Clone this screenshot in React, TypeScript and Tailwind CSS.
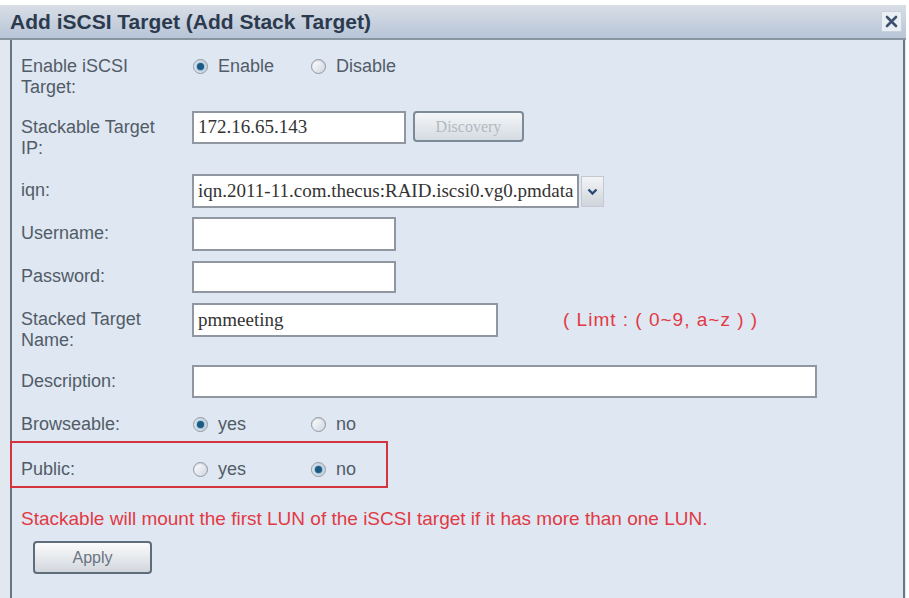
import React from "react";

const labelCls = "w-[171px] shrink-0 text-[18px] leading-[21px] text-[#525c67]";
const boxCls = "bg-white border-2 border-[#9097a0] flex items-center pl-[4px] font-['Liberation_Serif',serif] text-[19px] text-[#333]";

function Radio({ checked, label }: { checked?: boolean; label: string }) {
    return (
        <div className="flex items-center w-[118px] h-[21px]">
            <span className="w-[15px] h-[15px] rounded-full border border-[#8f98a3] bg-gradient-to-br from-white to-[#cfd7e1] flex items-center justify-center shrink-0 shadow-[inset_0_1px_1px_rgba(0,0,0,0.15)]">
                {checked && <span className="w-[7px] h-[7px] rounded-full bg-[#1d5a82] shadow-[0_0_2px_1px_rgba(80,150,200,0.7)]" />}
            </span>
            <span className="ml-[10px] text-[18px] leading-[21px] text-[#525c67]">{label}</span>
        </div>
    );
}

export default function App() {
    return (
        <div className="w-[909px] h-[598px] bg-white overflow-hidden font-['Liberation_Sans',Arial,sans-serif]">
            <div className="mt-[5px] w-[906px] h-[593px] flex flex-col bg-[#e2e8f0]">
                {/* title bar */}
                <div className="h-[35px] shrink-0 flex items-center justify-between pl-[10px] pr-[4px] bg-gradient-to-b from-[#d9dee6] to-[#b7c5d7] border-b-2 border-[#8a95a2]">
                    <span className="text-[21px] font-bold text-[#2c3a4e]">Add iSCSI Target (Add Stack Target)</span>
                    <span className="w-[21px] h-[21px] flex items-center justify-center bg-[#eaeff5] border border-[#c8d1dc] rounded-[2px]">
                        <svg width="13" height="13" viewBox="0 0 13 13">
                            <path d="M2 2 L11 11 M11 2 L2 11" stroke="#3e5170" strokeWidth="2.6" strokeLinecap="round" />
                        </svg>
                    </span>
                </div>

                <div className="flex-1 flex pl-[10px] pr-[1px]">
                    <div className="flex-1 border-l-2 border-r-2 border-[#6c7682] bg-[#dee7f2] pl-[9px] flex flex-col">
                        {/* enable */}
                        <div className="mt-[16px] flex items-start">
                            <div className={labelCls}>Enable iSCSI<br />Target:</div>
                            <div className="flex ml-[1px]">
                                <Radio checked label="Enable" />
                                <Radio label="Disable" />
                            </div>
                        </div>

                        {/* stackable ip */}
                        <div className="mt-[13px] flex items-start">
                            <div className={labelCls + " pt-[6px]"}>Stackable Target<br />IP:</div>
                            <div className={boxCls + " w-[214px] h-[33px]"}>172.16.65.143</div>
                            <div className="ml-[7px] w-[111px] h-[31px] rounded-[4px] border-2 border-[#7d8b99] bg-gradient-to-b from-[#f4f6f8] to-[#d5dbe2] flex items-center justify-center font-['Liberation_Serif',serif] text-[16px] text-[#b3b9c0]">
                                Discovery
                            </div>
                        </div>

                        {/* iqn */}
                        <div className="mt-[15px] flex items-start">
                            <div className={labelCls + " pt-[6px]"}>iqn:</div>
                            <div className={boxCls + " w-[387px] h-[34px]"}>iqn.2011-11.com.thecus:RAID.iscsi0.vg0.pmdata</div>
                            <div className="ml-[2px] mt-[2px] w-[23px] h-[31px] bg-gradient-to-b from-[#f3f4f6] to-[#cfd5dc] border border-[#c3c9d0] flex items-center justify-center">
                                <svg width="11" height="8" viewBox="0 0 11 8">
                                    <path d="M1.5 1.5 L5.5 5.5 L9.5 1.5" stroke="#2a4a78" strokeWidth="2.4" fill="none" />
                                </svg>
                            </div>
                        </div>

                        {/* username */}
                        <div className="mt-[9px] flex items-start">
                            <div className={labelCls + " pt-[6px]"}>Username:</div>
                            <div className={boxCls + " w-[204px] h-[34px]"} />
                        </div>

                        {/* password */}
                        <div className="mt-[10px] flex items-start">
                            <div className={labelCls + " pt-[5px]"}>Password:</div>
                            <div className={boxCls + " w-[204px] h-[32px]"} />
                        </div>

                        {/* stacked target name */}
                        <div className="mt-[10px] flex items-start">
                            <div className={labelCls + " pt-[6px]"}>Stacked Target<br />Name:</div>
                            <div className={boxCls + " w-[306px] h-[34px]"}>pmmeeting</div>
                            <div className="ml-[65px] pt-[6px] text-[19px] leading-[21px] tracking-[1px] text-[#e23a44] whitespace-pre">( Limt : ( 0~9, a~z ) )</div>
                        </div>

                        {/* description */}
                        <div className="mt-[14px] flex items-start">
                            <div className={labelCls + " pt-[6px]"}>Description:</div>
                            <div className={boxCls + " w-[625px] h-[33px]"} />
                        </div>

                        {/* browseable */}
                        <div className="mt-[14px] h-[24px] flex items-center">
                            <div className={labelCls}>Browseable:</div>
                            <div className="flex ml-[1px]">
                                <Radio checked label="yes" />
                                <Radio label="no" />
                            </div>
                        </div>

                        {/* public, marked */}
                        <div className="mt-[5px] ml-[-11px] w-[378px] h-[47px] border-2 border-[#d3343d] pl-[9px] pt-[10px] flex items-center">
                            <div className={labelCls}>Public:</div>
                            <div className="flex ml-[1px]">
                                <Radio label="yes" />
                                <Radio checked label="no" />
                            </div>
                        </div>

                        <div className="mt-[20px] text-[19px] leading-[21px] text-[#e23a44]">
                            Stackable will mount the first LUN of the iSCSI target if it has more than one LUN.
                        </div>

                        <div className="mt-[12px] ml-[12px] w-[119px] h-[33px] rounded-[4px] border-2 border-[#5f6c79] bg-gradient-to-b from-[#fbfbfc] to-[#d2d7dd] flex items-center justify-center text-[16px] text-[#6a7482]">
                            Apply
                        </div>
                    </div>
                </div>
            </div>
        </div>
    );
}
